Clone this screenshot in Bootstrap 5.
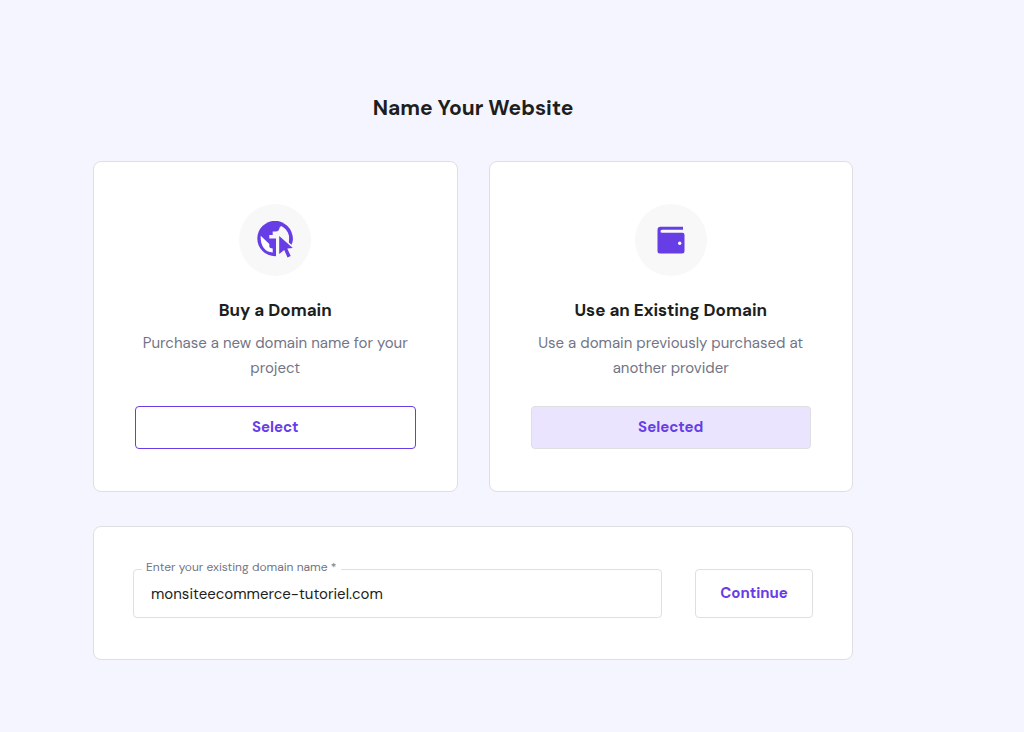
<!DOCTYPE html>
<html lang="en">
<head>
<meta charset="utf-8">
<meta name="viewport" content="width=device-width, initial-scale=1">
<title>Name Your Website</title>
<link href="https://cdn.jsdelivr.net/npm/bootstrap@5.3.0/dist/css/bootstrap.min.css" rel="stylesheet">
<style>
  :root { --brand: #673de6; --line: #dfdfe2; --ink: #1d1e20; --muted-ink: #727586; }
  body { background: #f4f5ff; color: var(--ink); font-family: "DM Sans", Inter, "Open Sans", sans-serif; font-size: 15px; }
  .setup { padding: 93px 171px 72px 93px; }
  .setup-title { font-size: 21px; line-height: 30px; margin-bottom: 38px; }
  .choices { --bs-gutter-x: 31px; margin-bottom: 34px; }
  .panel { border: 1px solid var(--line); border-radius: 8px; }
  .choice { padding: 42px 41px; }
  .choice-icon { width: 72px; height: 72px; background: #f8f8f8; margin-bottom: 22px; }
  .choice-title { font-size: 17px; line-height: 25px; margin-bottom: 8px; }
  .choice-text { color: var(--muted-ink); line-height: 25px; margin-bottom: 25px; }
  .btn { --bs-btn-color: var(--brand); --bs-btn-bg: #fff; --bs-btn-border-color: var(--line); --bs-btn-font-size: 15px; --bs-btn-font-weight: 700; --bs-btn-border-radius: 4px; --bs-btn-hover-color: var(--brand); --bs-btn-hover-bg: #ebe4ff; --bs-btn-hover-border-color: var(--brand); line-height: 21px; }
  .choice .btn { --bs-btn-padding-y: 10px; }
  .btn-pick { --bs-btn-border-color: var(--brand); }
  .btn-picked { --bs-btn-bg: #ebe4ff; }
  .domain-form { padding: 42px 39px 41px; gap: 33px; }
  .domain-field .form-control { height: 49px; padding: 0 17px; border-color: var(--line); border-radius: 4px; color: var(--ink); font-size: 15px; }
  .domain-field label { left: 9px; top: -11px; padding: 0 4px; color: var(--muted-ink); font-size: 12px; line-height: 18px; }
  .domain-form .btn { width: 118px; height: 49px; }
</style>
</head>
<body>
<main class="setup">
  <h1 class="setup-title fw-bold text-center">Name Your Website</h1>
  <div class="row choices">
    <div class="col-6">
      <section class="panel choice bg-white h-100 d-flex flex-column align-items-center text-center">
        <div class="choice-icon rounded-circle d-flex align-items-center justify-content-center">
          <svg width="38" height="38" viewBox="0 0 38 38" aria-hidden="true">
            <circle cx="19" cy="17.500" r="17.700" fill="#673de6"/>
            <path d="M4.700 14.700 13.300 23v2q0 2.500 3.400 2.500v4C9 31 4.200 25 4.700 14.700Z" fill="#fff"/>
            <path d="M13.300 14h3.400v-3.500h3q3.500 0 4-4.200l1.500-1.300C30 7.500 33.300 12 33.300 17.500q0 2-.4 4L38 26v11H20V17.500h-6.700Z" fill="#f8f8f8"/>
            <path d="M23.200 15 36.800 27l-5.500.5 3.400 7.400-3.200 1.500-3.300-7.500-5 4Z" fill="#673de6"/>
            <path d="M32.500 11 36 13q1.300 4.500.1 9l-3.200-1q1-4.500-.4-10Z" fill="#673de6"/>
          </svg>
        </div>
        <h2 class="choice-title fw-bold">Buy a Domain</h2>
        <p class="choice-text">Purchase a new domain name for your project</p>
        <button type="button" class="btn btn-pick w-100">Select</button>
      </section>
    </div>
    <div class="col-6">
      <section class="panel choice bg-white h-100 d-flex flex-column align-items-center text-center">
        <div class="choice-icon rounded-circle d-flex align-items-center justify-content-center">
          <svg width="28" height="28" viewBox="0 0 28 28" aria-hidden="true">
            <path d="M3.500.8H26v3H5q-1.500 0-1.500 1.500T5 6.800h20.500Q27.500 6.800 27.500 9v16q0 2.500-2.500 2.500H3Q.5 27.500.5 25V4Q.5.8 3.500.8Z" fill="#673de6"/>
            <circle cx="22.700" cy="17.200" r="1.700" fill="#fff"/>
          </svg>
        </div>
        <h2 class="choice-title fw-bold">Use an Existing Domain</h2>
        <p class="choice-text">Use a domain previously purchased at another provider</p>
        <button type="button" class="btn btn-picked w-100">Selected</button>
      </section>
    </div>
  </div>
  <form class="panel domain-form bg-white d-flex align-items-center">
    <div class="domain-field position-relative flex-grow-1">
      <input type="text" class="form-control" id="domain" value="monsiteecommerce-tutoriel.com" required>
      <label for="domain" class="position-absolute bg-white">Enter your existing domain name *</label>
    </div>
    <button type="button" class="btn">Continue</button>
  </form>
</main>
<script src="https://cdn.jsdelivr.net/npm/bootstrap@5.3.0/dist/js/bootstrap.bundle.min.js"></script>
</body>
</html>
